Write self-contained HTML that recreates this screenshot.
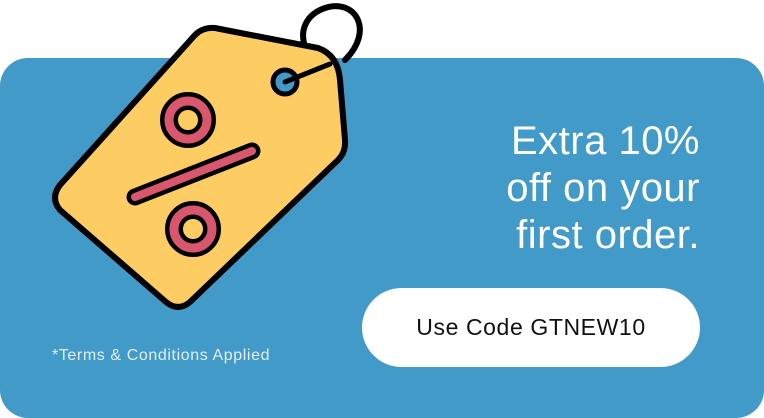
<!DOCTYPE html>
<html><head><style>
html,body{margin:0;padding:0;background:#fff;width:764px;height:418px;overflow:hidden;font-family:"Liberation Sans",sans-serif}
.card{position:absolute;left:0;top:58px;width:764px;height:360px;background:#429ac9;border-radius:28px}
.head{position:absolute;right:64px;top:118px;text-align:right;color:#fff;font-size:40px;line-height:47px;letter-spacing:0.5px}
.btn{position:absolute;left:362px;top:288px;width:338px;height:79px;background:#fff;border-radius:40px;text-align:center;line-height:79px;font-size:23px;letter-spacing:0.6px;color:#111}
.terms{position:absolute;left:52px;top:347px;color:#e3eef6;font-size:16px;letter-spacing:0.6px}
svg{position:absolute;left:0;top:0}
</style></head><body>
<div class="card"></div>
<svg width="764" height="418">
<path d="M333 72 C 300 62, 290 20, 325 8 C 355 -2, 375 30, 345 60" fill="none" stroke="#000" stroke-width="6" stroke-linecap="round"/>
<path d="M215 28 L 318 48 Q338 55 340 80 L 345 140 Q346 152 338 160 L 190 302 Q178 312 166 302 L 60 210 Q50 198 60 185 L 195 35 Q203 27 215 28 Z" fill="#fdcd63" stroke="#000" stroke-width="6" stroke-linejoin="round"/>
<circle cx="285" cy="82" r="12" fill="#429ac9" stroke="#000" stroke-width="5"/>
<path d="M285 82 L 330 64" stroke="#000" stroke-width="5" stroke-linecap="round"/>
<circle cx="188" cy="120" r="19" fill="none" stroke="#000" stroke-width="18"/>
<circle cx="188" cy="120" r="19" fill="none" stroke="#d9566f" stroke-width="9"/>
<circle cx="193" cy="229" r="19" fill="none" stroke="#000" stroke-width="18"/>
<circle cx="193" cy="229" r="19" fill="none" stroke="#d9566f" stroke-width="9"/>
<path d="M135 197 L 252 151" stroke="#000" stroke-width="17" stroke-linecap="round"/>
<path d="M135 197 L 252 151" stroke="#d9566f" stroke-width="8" stroke-linecap="round"/>
</svg>
<div class="head">Extra 10%<br>off on your<br>first order.</div>
<div class="btn">Use Code GTNEW10</div>
<div class="terms">*Terms &amp; Conditions Applied</div>
</body></html>
